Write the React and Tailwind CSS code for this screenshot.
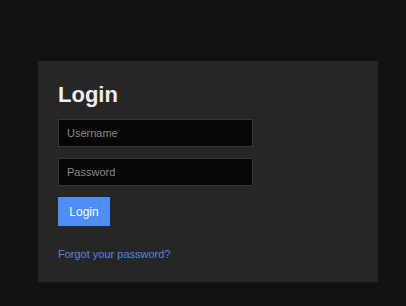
import { useState } from "react";

export default function App() {
  const [username, setUsername] = useState("");
  const [password, setPassword] = useState("");

  return (
    <div className="min-h-[306px] w-full bg-[#121212] pt-[61px] pl-[38px] font-['Liberation_Sans',Arial,sans-serif]">
      <div className="w-[340px] bg-[#262626] px-[20px] pt-[21px] pb-[21px]">
        <h2 className="mb-[11px] text-[22px] leading-[26px] font-bold text-[#eeeeee]">Login</h2>
        <form onSubmit={(e) => e.preventDefault()} className="flex flex-col items-start">
          <input
            type="text"
            value={username}
            onChange={(e) => setUsername(e.target.value)}
            placeholder="Username"
            className="mb-[11px] h-[28px] w-[195px] border border-[#363636] bg-[#060606] px-2 text-[11px] text-white placeholder:text-[#8a8a8a] focus:outline-none"
          />
          <input
            type="password"
            value={password}
            onChange={(e) => setPassword(e.target.value)}
            placeholder="Password"
            className="mb-[11px] h-[28px] w-[195px] border border-[#363636] bg-[#060606] px-2 text-[11px] text-white placeholder:text-[#8a8a8a] focus:outline-none"
          />
          <button
            type="submit"
            className="h-[29px] w-[52px] bg-[#4f8ef7] text-center text-[12px] text-white"
          >
            Login
          </button>
        </form>
        <a href="#" className="mt-[22px] block text-[11px] leading-[13px] text-[#4f87e0]">
          Forgot your password?
        </a>
      </div>
    </div>
  );
}
